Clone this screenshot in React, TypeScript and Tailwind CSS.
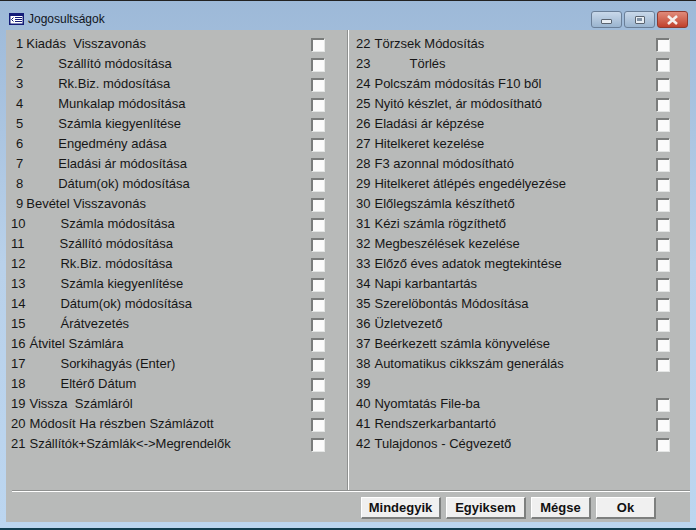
import React from 'react';

type Perm = { n: number; label: string; pad: string; box?: boolean };

const LEFT: Perm[] = [
  { n: 1, label: 'Kiadás  Visszavonás', pad: 'pl-[3px]' },
  { n: 2, label: 'Szállító módosítása', pad: 'pl-[35px]' },
  { n: 3, label: 'Rk.Biz. módosítása', pad: 'pl-[35px]' },
  { n: 4, label: 'Munkalap módosítása', pad: 'pl-[35px]' },
  { n: 5, label: 'Számla kiegyenlítése', pad: 'pl-[35px]' },
  { n: 6, label: 'Engedmény adása', pad: 'pl-[35px]' },
  { n: 7, label: 'Eladási ár módosítása', pad: 'pl-[35px]' },
  { n: 8, label: 'Dátum(ok) módosítása', pad: 'pl-[35px]' },
  { n: 9, label: 'Bevétel Visszavonás', pad: 'pl-[3px]' },
  { n: 10, label: 'Számla módosítása', pad: 'pl-[35px]' },
  { n: 11, label: 'Szállító módosítása', pad: 'pl-[35px]' },
  { n: 12, label: 'Rk.Biz. módosítása', pad: 'pl-[35px]' },
  { n: 13, label: 'Számla kiegyenlítése', pad: 'pl-[35px]' },
  { n: 14, label: 'Dátum(ok) módosítása', pad: 'pl-[35px]' },
  { n: 15, label: 'Árátvezetés', pad: 'pl-[35px]' },
  { n: 16, label: 'Átvitel Számlára', pad: 'pl-[4px]' },
  { n: 17, label: 'Sorkihagyás (Enter)', pad: 'pl-[35px]' },
  { n: 18, label: 'Eltérő Dátum', pad: 'pl-[35px]' },
  { n: 19, label: 'Vissza  Számláról', pad: 'pl-[4px]' },
  { n: 20, label: 'Módosít Ha részben Számlázott', pad: 'pl-[4px]' },
  { n: 21, label: 'Szállítók+Számlák<->Megrendelők', pad: 'pl-[4px]' },
];

const RIGHT: Perm[] = [
  { n: 22, label: 'Törzsek Módosítás', pad: 'pl-[4px]' },
  { n: 23, label: 'Törlés', pad: 'pl-[39px]' },
  { n: 24, label: 'Polcszám módosítás F10 ből', pad: 'pl-[4px]' },
  { n: 25, label: 'Nyitó készlet, ár módosítható', pad: 'pl-[4px]' },
  { n: 26, label: 'Eladási ár képzése', pad: 'pl-[4px]' },
  { n: 27, label: 'Hitelkeret kezelése', pad: 'pl-[4px]' },
  { n: 28, label: 'F3 azonnal módosítható', pad: 'pl-[4px]' },
  { n: 29, label: 'Hitelkeret átlépés engedélyezése', pad: 'pl-[4px]' },
  { n: 30, label: 'Előlegszámla készíthető', pad: 'pl-[4px]' },
  { n: 31, label: 'Kézi számla rögzíthető', pad: 'pl-[4px]' },
  { n: 32, label: 'Megbeszélések kezelése', pad: 'pl-[4px]' },
  { n: 33, label: 'Előző éves adatok megtekintése', pad: 'pl-[4px]' },
  { n: 34, label: 'Napi karbantartás', pad: 'pl-[4px]' },
  { n: 35, label: 'Szerelöbontás Módosítása', pad: 'pl-[4px]' },
  { n: 36, label: 'Üzletvezető', pad: 'pl-[4px]' },
  { n: 37, label: 'Beérkezett számla könyvelése', pad: 'pl-[4px]' },
  { n: 38, label: 'Automatikus cikkszám generálás', pad: 'pl-[4px]' },
  { n: 39, label: '', pad: 'pl-[4px]', box: false },
  { n: 40, label: 'Nyomtatás File-ba', pad: 'pl-[4px]' },
  { n: 41, label: 'Rendszerkarbantartó', pad: 'pl-[4px]' },
  { n: 42, label: 'Tulajdonos - Cégvezető', pad: 'pl-[4px]' },
];

const Row = ({ item }: { item: Perm }) => (
  <div className="flex h-5 items-center justify-between">
    <div className="flex items-center whitespace-pre">
      <span className={item.n < 10 ? 'ml-[4px]' : '-ml-px'}>{item.n}</span>
      <span className={item.pad}>{item.label}</span>
    </div>
    {item.box !== false && (
      <span className="h-[13px] w-[13px] border-t-2 border-l-2 border-t-[#7a7c7b] border-l-[#7a7c7b] bg-[#fbfbfb] shadow-[1px_1px_0_#e4e6e5]" />
    )}
  </div>
);

const Btn = ({ label, w }: { label: string; w: string }) => (
  <button className={`h-[22px] ${w} border-t border-l border-white border-r-2 border-b-2 border-r-[#7d7f7e] border-b-[#7d7f7e] bg-[#f0f0f0] text-[13px] font-bold text-[#111]`}>
    {label}
  </button>
);

const WinBtn = ({ w, className, children }: { w: string; className: string; children: React.ReactNode }) => (
  <div className={`flex h-[17px] ${w} items-center justify-center rounded-[3px] border border-[#6a7f98] ${className}`}>
    {children}
  </div>
);

const App: React.FC = () => {
  return (
    <div className="flex h-[530px] w-[696px] flex-col overflow-hidden border-b-2 border-[#123f52] bg-gradient-to-b from-[#9db9d8] via-[#b9d1ea] to-[#bcd6f0] font-['Liberation_Sans',sans-serif] text-[13px] text-[#161616]">
      {/* Title bar */}
      <div className="flex h-[30px] items-start justify-between border-t border-[#222] pl-[3px] pr-[8px]">
        <div className="flex items-center gap-[4px] pt-[12px] pl-[6px]">
          <svg width="15" height="12" viewBox="0 0 15 12">
            <rect x="0.75" y="0.75" width="13.5" height="10.5" fill="#fff" stroke="#131c78" strokeWidth="1.5" />
            <rect x="1" y="1" width="13" height="2" fill="#131c78" />
            <path d="M6 4.5h7M6 6.5h7M6 8.5h7M4.5 4.5L2.5 6.5 4.5 8.5" stroke="#131c78" fill="none" />
          </svg>
          <span className="text-[12px] leading-[12px] text-[#10151c]">Jogosultságok</span>
        </div>
        <div className="flex gap-[2px] pt-[10px]">
          <WinBtn w="w-[31px]" className="bg-gradient-to-b from-[#c9d9ea] to-[#9ab4cf]">
            <span className="mt-[4px] h-[5px] w-[11px] rounded-[1px] border border-[#5a6470] bg-[#e8eef4]" />
          </WinBtn>
          <WinBtn w="w-[31px]" className="bg-gradient-to-b from-[#c9d9ea] to-[#9ab4cf]">
            <span className="flex h-[8px] w-[10px] items-center justify-center rounded-[1px] border border-[#5a6470] bg-[#e8eef4]">
              <span className="h-[3px] w-[5px] bg-[#7f91a5]" />
            </span>
          </WinBtn>
          <WinBtn w="w-[31px]" className="border-[#8e3a30] bg-gradient-to-b from-[#e08a7a] to-[#c0402c]">
            <svg width="13" height="10" viewBox="0 0 13 10">
              <path d="M2 1l9 8M11 1l-9 8" stroke="#f5f0ee" strokeWidth="2.6" />
            </svg>
          </WinBtn>
        </div>
      </div>

      {/* Client area */}
      <div className="mx-[6px] mb-[6px] flex flex-1 flex-col bg-[#b8bab9] pl-[6px]">
        <div className="flex h-[461px] border-b border-[#8f9190]">
          <div className="w-[335px] pt-[4px] pr-[23px]">
            {LEFT.map((item) => (
              <Row key={item.n} item={item} />
            ))}
          </div>
          <div className="w-[2px] border-l border-[#8f9190] bg-white" />
          <div className="flex-1 pt-[4px] pl-[8px] pr-[21px]">
            {RIGHT.map((item) => (
              <Row key={item.n} item={item} />
            ))}
          </div>
        </div>
        <div className="h-[1px] bg-white" />
        <div className="flex justify-end gap-[5px] pt-[5px] pr-[34px]">
          <Btn label="Mindegyik" w="w-[80px]" />
          <Btn label="Egyiksem" w="w-[80px]" />
          <Btn label="Mégse" w="w-[60px]" />
          <Btn label="Ok" w="w-[60px]" />
        </div>
      </div>
    </div>
  );
};

export default App;
